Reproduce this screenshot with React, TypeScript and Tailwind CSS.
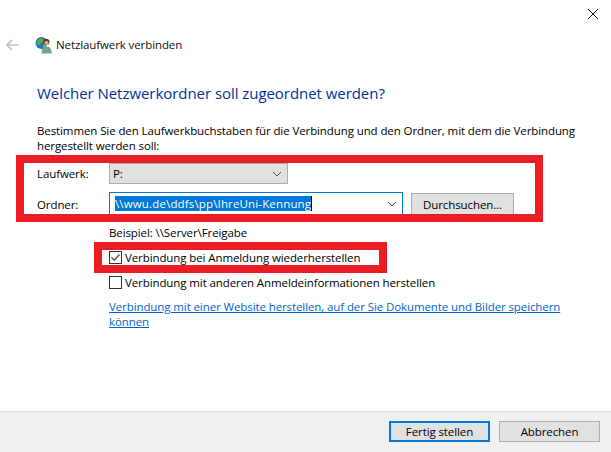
export default function App() {
  const font = { fontFamily: '"Open Sans", "Noto Sans", sans-serif' };
  return (
    <div style={font} className="relative w-[611px] h-[452px] bg-white flex flex-col text-[11.5px] leading-[15px] tracking-[-0.1px] text-[#000] overflow-hidden">
      <div className="h-[30px] flex justify-end shrink-0">
        <svg width="10" height="10" viewBox="0 0 10 10" className="mt-[9px] mr-[13px]">
          <path d="M0 0 L10 10 M10 0 L0 10" stroke="#111" strokeWidth="1" fill="none" />
        </svg>
      </div>
      <div className="h-[29px] flex items-center shrink-0">
        <svg width="14" height="12" viewBox="0 0 14 12" className="ml-[6px]">
          <path d="M6 1 L1 6 L6 11 M1 6 H13" stroke="#c4c4c4" strokeWidth="1.6" fill="none" />
        </svg>
        <svg width="18" height="18" viewBox="0 0 18 18" className="ml-[15px]">
          <circle cx="6.5" cy="7" r="6" fill="#2a6fc4" />
          <path d="M2 5 Q5 1 8 3 Q9 6 6 7 Q5 10 3 9 Q1 8 2 5Z" fill="#4fae3f" />
          <path d="M8 9 Q10 8 11 10 L8 13Z" fill="#6cc05a" />
          <circle cx="11.5" cy="6" r="3" fill="#4a2f22" />
          <circle cx="11.5" cy="7" r="2.2" fill="#d9a57c" />
          <path d="M6.5 17.5 Q6.5 10.5 11.5 10.5 Q16.5 10.5 17 17.5Z" fill="#6fa88a" />
        </svg>
        <span className="ml-[3px] text-[#111]">Netzlaufwerk verbinden</span>
      </div>
      <div className="flex-1 flex flex-col pl-[37px]">
        <h1 className="mt-[23px] text-[15px] leading-[22px] tracking-[-0.05px] text-[#003399] font-normal">Welcher Netzwerkordner soll zugeordnet werden?</h1>
        <p className="mt-[19px] w-[550px]">Bestimmen Sie den Laufwerkbuchstaben für die Verbindung und den Ordner, mit dem die Verbindung hergestellt werden soll:</p>
        <div className="mt-[10px] flex items-center h-[21px]">
          <span className="w-[72px]">Laufwerk:</span>
          <div className="w-[179px] h-[21px] bg-[#e1e1e1] border border-[#adadad] flex items-center justify-between pl-[3px] pr-[5px]">
            <span>P:</span>
            <Chevron />
          </div>
        </div>
        <div className="mt-[8px] flex items-start h-[26px]">
          <span className="w-[72px] mt-[5px]">Ordner:</span>
          <div className="w-[294px] h-[23px] bg-white border border-[#0078d7] flex items-center justify-between pl-[5px] pr-[5px]">
            <span className="bg-[#0078d7] text-white border-r border-black tracking-[0.15px]">\\wwu.de\ddfs\pp\IhreUni-Kennung</span>
            <Chevron />
          </div>
          <div className="ml-[8px] mt-px w-[103px] h-[23px] bg-[#e1e1e1] border border-[#adadad] flex items-center justify-center">Durchsuchen...</div>
        </div>
        <div className="pl-[72px] flex flex-col">
          <span className="mt-[7px]">Beispiel: \\Server\Freigabe</span>
          <label className="mt-[10px] flex items-center gap-[3px]">
            <span className="w-[13px] h-[13px] border border-[#333] flex items-center justify-center">
              <svg width="11" height="11" viewBox="0 0 11 11">
                <path d="M1.5 5.5 L4.3 8.3 L9.5 2.5" stroke="#555" strokeWidth="1.4" fill="none" />
              </svg>
            </span>
            Verbindung bei Anmeldung wiederherstellen
          </label>
          <label className="mt-[10px] flex items-center gap-[3px]">
            <span className="w-[13px] h-[13px] border border-[#333]" />
            Verbindung mit anderen Anmeldeinformationen herstellen
          </label>
          <a className="mt-[9px] w-[470px] text-[#0066cc] underline">Verbindung mit einer Website herstellen, auf der Sie Dokumente und Bilder speichern können</a>
        </div>
      </div>
      <div className="h-[41px] shrink-0 bg-[#f0f0f0] border-t border-[#dfdfdf] flex items-start justify-end gap-[9px] pt-[9px] pr-[11px]">
        <div className="w-[101px] h-[21px] bg-[#e1e1e1] border-2 border-[#0078d7] flex items-center justify-center">Fertig stellen</div>
        <div className="w-[101px] h-[21px] bg-[#e1e1e1] border border-[#adadad] flex items-center justify-center">Abbrechen</div>
      </div>
      <div className="absolute left-[16px] top-[155px] w-[527px] h-[67px] border-[8px] border-[#ed1c24]" />
      <div className="absolute left-[94px] top-[242px] w-[293px] h-[31px] border-[8px] border-[#ed1c24]" />
    </div>
  );
}

function Chevron() {
  return (
    <svg width="10" height="6" viewBox="0 0 10 6">
      <path d="M1 1 L5 5 L9 1" stroke="#555" strokeWidth="1" fill="none" />
    </svg>
  );
}
